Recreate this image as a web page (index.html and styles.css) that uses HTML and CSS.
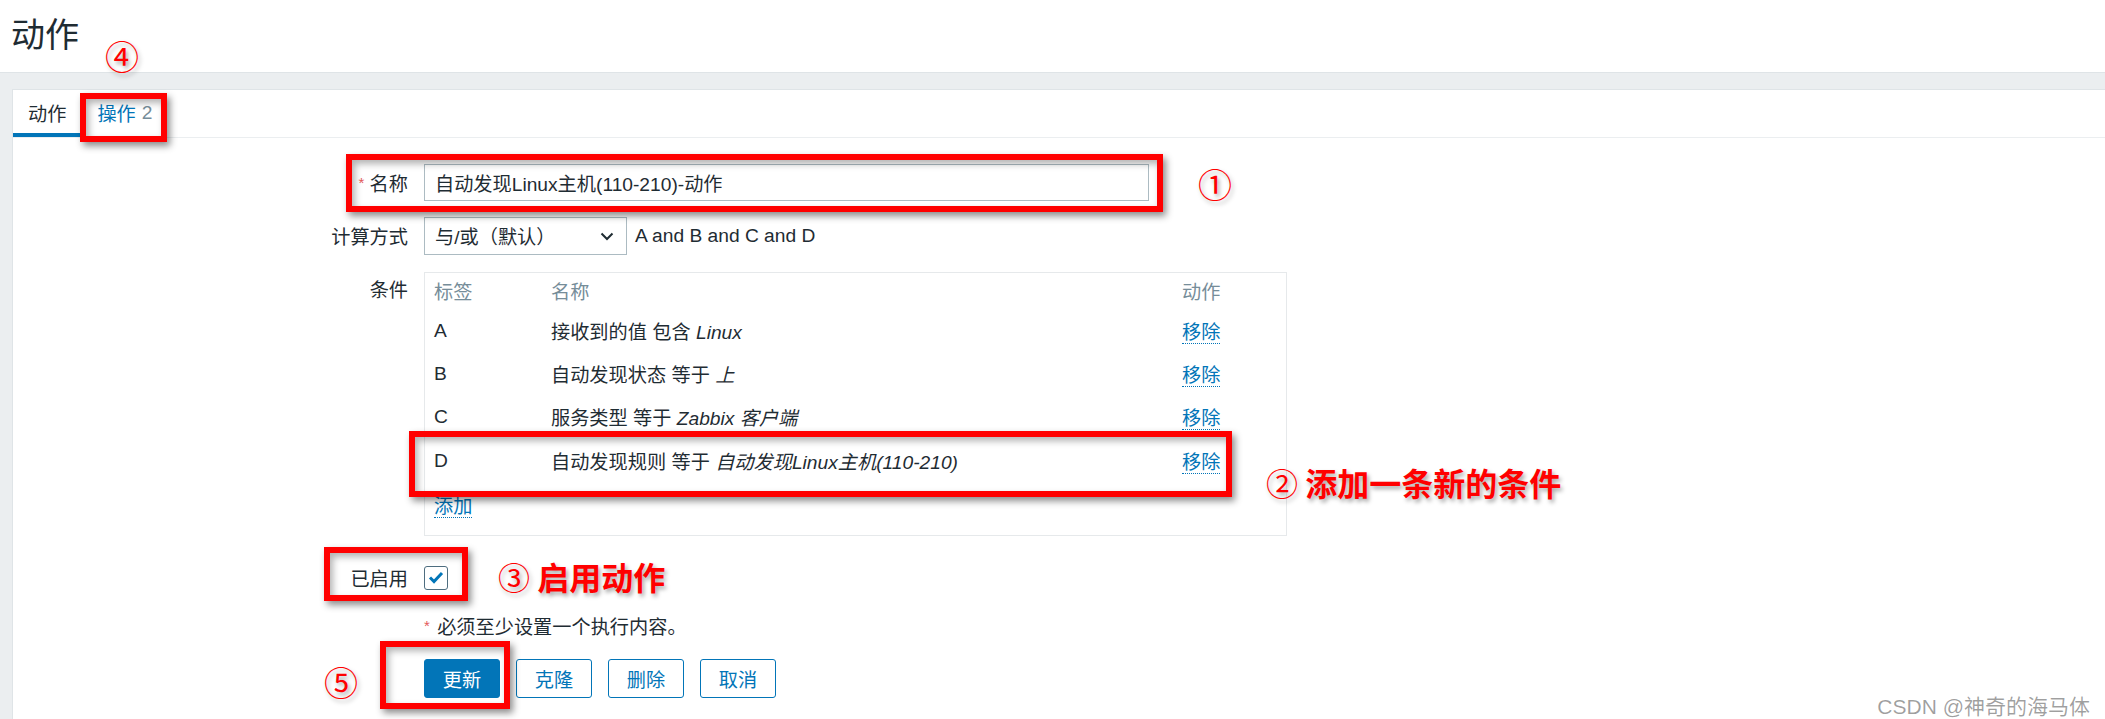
FILE: index.html
```html
<!DOCTYPE html>
<html lang="zh-CN">
  <head>
    <meta charset="UTF-8" />
    <meta name="viewport" content="width=device-width, initial-scale=1.0" />
    <title>动作</title>
    <link rel="stylesheet" href="styles.css">
  </head>
  <body>
    <!-- page title -->
    <header class="page-header">
      <h1 class="page-title">动作</h1>
    </header>

    <main class="wrapper">
      <section class="panel">
        <!-- tabs -->
        <nav class="tabs">
          <a class="tab tab-active">动作</a>
          <a class="tab tab-link">操作<span class="tab-count">2</span></a>
        </nav>

        <form class="action-form">
          <div class="form-row">
            <label class="form-label"><span class="req">*</span> 名称</label>
            <div class="form-field">
              <input class="text-input" type="text" value="自动发现Linux主机(110-210)-动作" />
            </div>
          </div>

          <div class="form-row row-calc">
            <label class="form-label">计算方式</label>
            <div class="form-field field-inline">
              <div class="select-box">
                <span>与/或（默认）</span>
                <svg class="chevron" width="14" height="9" viewBox="0 0 14 9">
                  <polyline points="1.5,1.5 7,7 12.5,1.5" fill="none" stroke="#1f2c33" stroke-width="2" />
                </svg>
              </div>
              <span class="formula">A and B and C and D</span>
            </div>
          </div>

          <div class="form-row row-cond">
            <label class="form-label label-top">条件</label>
            <div class="form-field">
              <div class="cond-box">
                <table class="cond-table">
                  <thead>
                    <tr>
                      <th class="col-label">标签</th>
                      <th class="col-name">名称</th>
                      <th class="col-action">动作</th>
                    </tr>
                  </thead>
                  <tbody>
                    <tr class="row-short">
                      <td>A</td>
                      <td>接收到的值 包含 <em>Linux</em></td>
                      <td><a class="link">移除</a></td>
                    </tr>
                    <tr class="row-short">
                      <td>B</td>
                      <td>自动发现状态 等于 <em>上</em></td>
                      <td><a class="link">移除</a></td>
                    </tr>
                    <tr>
                      <td>C</td>
                      <td>服务类型 等于 <em>Zabbix 客户端</em></td>
                      <td><a class="link">移除</a></td>
                    </tr>
                    <tr>
                      <td>D</td>
                      <td>自动发现规则 等于 <em>自动发现Linux主机(110-210)</em></td>
                      <td><a class="link">移除</a></td>
                    </tr>
                    <tr>
                      <td colspan="3"><a class="link">添加</a></td>
                    </tr>
                  </tbody>
                </table>
              </div>
            </div>
          </div>

          <div class="form-row row-enabled">
            <label class="form-label">已启用</label>
            <div class="form-field">
              <span class="checkbox">
                <svg width="16" height="13" viewBox="0 0 16 13">
                  <polyline points="2,6.5 6,10.5 14,2" fill="none" stroke="#0275b8" stroke-width="3" />
                </svg>
              </span>
            </div>
          </div>

          <div class="form-row row-note">
            <span class="form-label"></span>
            <div class="form-field note"><span class="req">*</span> 必须至少设置一个执行内容。</div>
          </div>

          <div class="form-row row-buttons">
            <span class="form-label"></span>
            <div class="form-field buttons">
              <button type="button" class="btn btn-primary">更新</button>
              <button type="button" class="btn">克隆</button>
              <button type="button" class="btn">删除</button>
              <button type="button" class="btn">取消</button>
            </div>
          </div>
        </form>
      </section>
    </main>

    <!-- screenshot annotations -->
    <div class="marks">
      <span class="mark-box mark-tab"></span>
      <span class="mark-box mark-name"></span>
      <span class="mark-box mark-cond"></span>
      <span class="mark-box mark-enabled"></span>
      <span class="mark-box mark-update"></span>

      <span class="mark-num num-4">④</span>
      <span class="mark-num num-1">①</span>
      <span class="mark-num num-5">⑤</span>

      <span class="mark-text text-cond"><span class="mark-circle">②</span> 添加一条新的条件</span>
      <span class="mark-text text-enabled"><span class="mark-circle">③</span> 启用动作</span>

      <span class="watermark">CSDN @神奇的海马体</span>
    </div>
  </body>
</html>
```

FILE: styles.css
```css
/* resets */
* {
  margin: 0;
  padding: 0;
  box-sizing: border-box;
}
body {
  position: relative;
  height: 719px;
  overflow: hidden;
  font-family: "Liberation Sans", "Noto Sans CJK SC", sans-serif;
  font-size: 19.2px;
  color: #1f2c33;
  background: #ebeef0;
}

/* header */
.page-header {
  height: 73px;
  display: flex;
  align-items: center;
  padding: 0 11px 2px;
  background: #fff;
  border-bottom: 1px solid #dfe4e7;
}
.page-title {
  font-size: 34px;
  font-weight: normal;
  line-height: 1;
}

.wrapper {
  padding: 16px 0 0 12px;
}
.panel {
  height: 640px;
  background: #fff;
  border-top: 1px solid #dfe4e7;
  border-left: 1px solid #dfe4e7;
}

/* tabs */
.tabs {
  display: flex;
  height: 48px;
  border-bottom: 1px solid #ebeef0;
}
.tab {
  display: flex;
  align-items: center;
  padding: 3px 14px 0 15px;
  border-bottom: 4px solid transparent;
}
.tab-active {
  border-bottom-color: #0275b8;
}
.tab-link {
  padding-left: 17px;
  color: #0275b8;
}
.tab-count {
  margin-left: 6px;
  color: #768d99;
}

/* form */
.action-form {
  padding-top: 26px;
}
.form-row {
  display: grid;
  grid-template-columns: 395px 1fr;
  column-gap: 16px;
  align-items: center;
}
.form-label {
  text-align: right;
}
.label-top {
  align-self: start;
  line-height: 38px;
}
.req {
  color: #e45959;
  font-size: 15px;
  vertical-align: 3px;
}
.text-input {
  width: 725px;
  height: 37px;
  padding: 0 10px;
  border: 1px solid #acbbc2;
  font: inherit;
  color: #1f2c33;
  outline: none;
}

.row-calc {
  margin-top: 16px;
}
.field-inline {
  display: flex;
  align-items: center;
}
.select-box {
  width: 203px;
  height: 38px;
  display: flex;
  align-items: center;
  justify-content: space-between;
  padding: 0 12px 0 10px;
  border: 1px solid #acbbc2;
}
.formula {
  margin-left: 8px;
}

/* conditions */
.row-cond {
  margin-top: 17px;
}
.cond-box {
  width: 863px;
  padding: 0 9px 8px;
  border: 1px solid #e6e9eb;
}
.cond-table {
  width: 100%;
  border-collapse: collapse;
}
.cond-table th {
  height: 36px;
  font-weight: normal;
  text-align: left;
  color: #768d99;
}
.cond-table td {
  height: 44px;
  padding: 0;
}
.cond-table .row-short td {
  height: 43px;
}
.col-label {
  width: 117px;
}
.col-action {
  width: 95px;
}
.link {
  color: #0275b8;
  border-bottom: 1px dotted #0275b8;
}

/* enabled */
.row-enabled {
  margin-top: 23px;
  height: 37px;
}
.checkbox {
  width: 24px;
  height: 24px;
  display: flex;
  align-items: center;
  justify-content: center;
  border: 1px solid #4e6d7f;
  border-radius: 3px;
}

.row-note {
  margin-top: 18px;
  line-height: 24px;
}
.note .req {
  margin-right: 2px;
}

/* buttons */
.row-buttons {
  margin-top: 19px;
}
.buttons {
  display: flex;
  gap: 16px;
}
.btn {
  width: 76px;
  height: 39px;
  font: inherit;
  color: #0275b8;
  background: #fff;
  border: 1px solid #0275b8;
  border-radius: 3px;
}
.btn-primary {
  color: #fff;
  background: #0275b8;
}

/* annotations over the screenshot */
.marks {
  position: absolute;
  top: 0;
  left: 0;
  width: 100%;
  height: 100%;
  pointer-events: none;
  font-family: "Noto Sans CJK SC", sans-serif;
}
.mark-box {
  position: absolute;
  border: 6px solid #ff0000;
  box-shadow: 3px 4px 7px rgba(0, 0, 0, 0.45),
    inset 3px 4px 7px rgba(0, 0, 0, 0.3);
}
.mark-tab {
  left: 80px;
  top: 93px;
  width: 87px;
  height: 49px;
}
.mark-name {
  left: 346px;
  top: 154px;
  width: 817px;
  height: 58px;
}
.mark-cond {
  left: 409px;
  top: 431px;
  width: 823px;
  height: 66px;
}
.mark-enabled {
  left: 324px;
  top: 547px;
  width: 144px;
  height: 54px;
}
.mark-update {
  left: 380px;
  top: 641px;
  width: 130px;
  height: 68px;
}

.mark-num,
.mark-text {
  position: absolute;
  color: #ff0000;
  line-height: 1;
  text-shadow: 2px 3px 4px rgba(0, 0, 0, 0.35);
}
.mark-num {
  font-size: 34px;
}
.num-4 {
  left: 105px;
  top: 39px;
}
.num-1 {
  left: 1198px;
  top: 167px;
}
.num-5 {
  left: 324px;
  top: 665px;
}
.mark-text {
  font-size: 32px;
  font-weight: bold;
  white-space: nowrap;
}
.mark-circle {
  font-weight: normal;
}
.text-cond {
  left: 1266px;
  top: 466px;
}
.text-enabled {
  left: 498px;
  top: 560px;
}

.watermark {
  position: absolute;
  right: 15px;
  top: 690px;
  font-family: "Liberation Sans", "Noto Sans CJK SC", sans-serif;
  font-size: 21px;
  color: rgba(0, 0, 0, 0.38);
  white-space: nowrap;
}
```
